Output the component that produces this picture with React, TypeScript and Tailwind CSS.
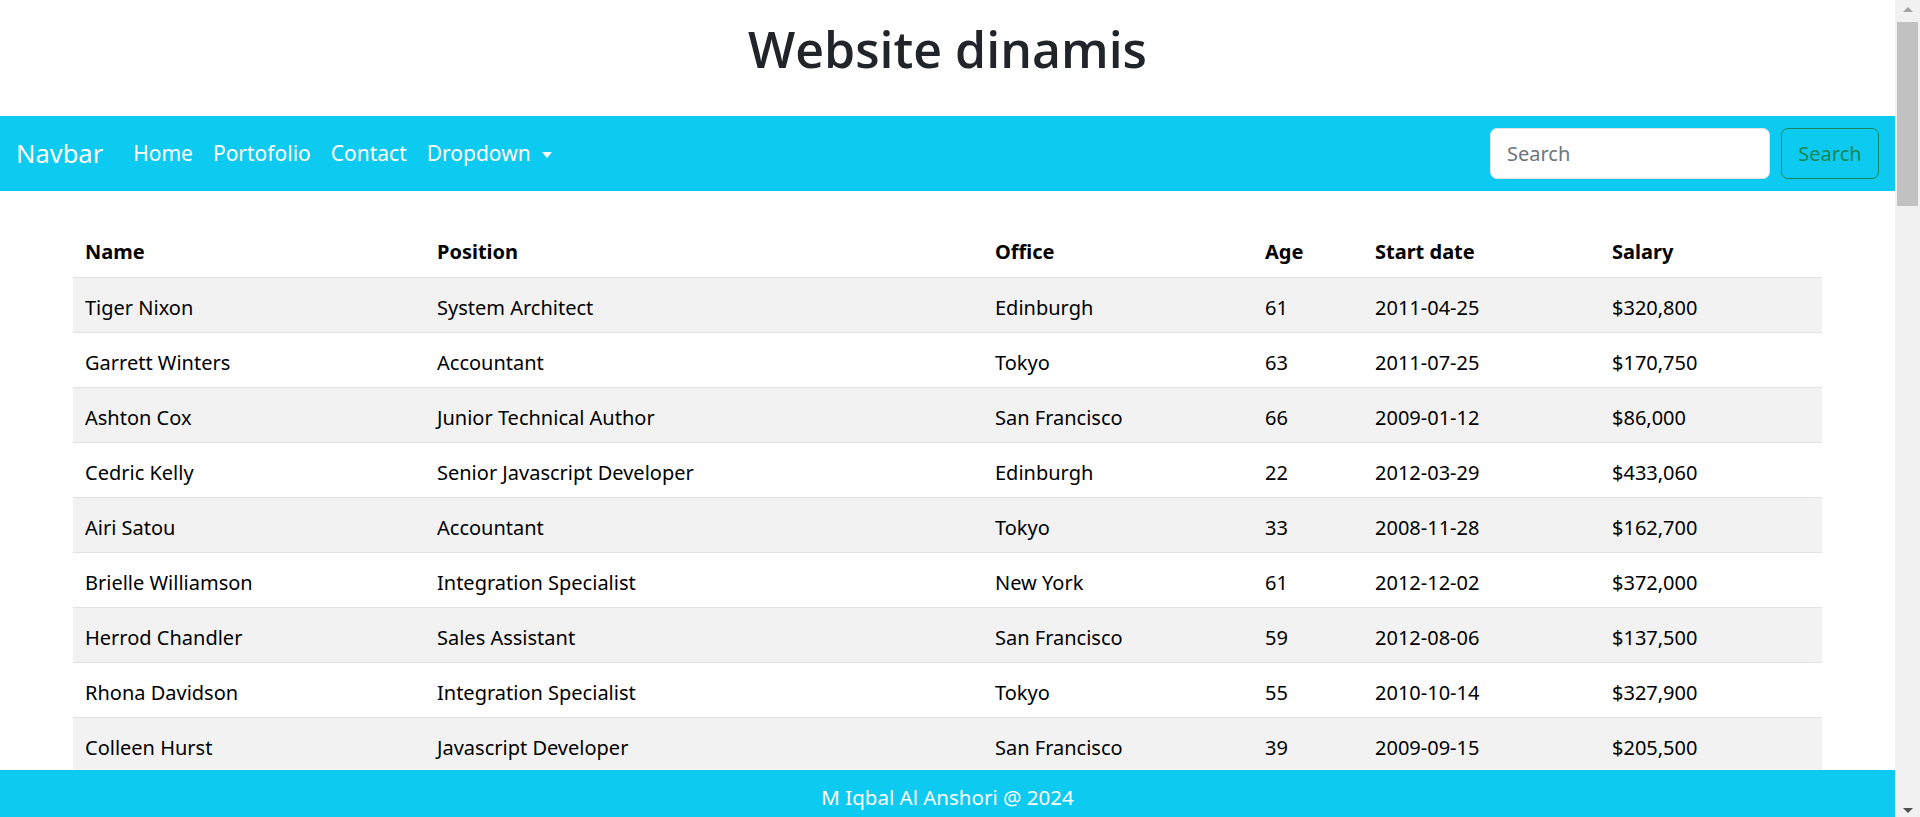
const rows = [
  ["Tiger Nixon", "System Architect", "Edinburgh", "61", "2011-04-25", "$320,800"],
  ["Garrett Winters", "Accountant", "Tokyo", "63", "2011-07-25", "$170,750"],
  ["Ashton Cox", "Junior Technical Author", "San Francisco", "66", "2009-01-12", "$86,000"],
  ["Cedric Kelly", "Senior Javascript Developer", "Edinburgh", "22", "2012-03-29", "$433,060"],
  ["Airi Satou", "Accountant", "Tokyo", "33", "2008-11-28", "$162,700"],
  ["Brielle Williamson", "Integration Specialist", "New York", "61", "2012-12-02", "$372,000"],
  ["Herrod Chandler", "Sales Assistant", "San Francisco", "59", "2012-08-06", "$137,500"],
  ["Rhona Davidson", "Integration Specialist", "Tokyo", "55", "2010-10-14", "$327,900"],
  ["Colleen Hurst", "Javascript Developer", "San Francisco", "39", "2009-09-15", "$205,500"],
];

const headers = ["Name", "Position", "Office", "Age", "Start date", "Salary"];

const grid = "grid grid-cols-[352px_558px_270px_110px_237px_222px]";

export default function App() {
  return (
    <div className="flex h-[817px] w-full overflow-hidden bg-white font-['Noto_Sans',sans-serif]">
      <div className="flex min-w-0 flex-1 flex-col">
        {/* page */}
        <div className="min-h-0 flex-1 overflow-hidden">
          <header className="h-[116px] pt-[19px] text-center">
            <h1 className="font-['Open_Sans','Noto_Sans',sans-serif] text-[50px] font-semibold leading-[1.2] text-[#212529]">Website dinamis</h1>
          </header>

          {/* Navbar */}
          <nav className="flex h-[75px] items-center bg-[#0dcaf0] pl-[16px] pr-[16px] text-white">
            <a href="#" className="mr-[20px] text-[25.5px] leading-[1.5]">Navbar</a>
            <ul className="flex items-center text-[21px] leading-[1.5]">
              <li><a href="#" className="block px-[10px]">Home</a></li>
              <li><a href="#" className="block px-[10px]">Portofolio</a></li>
              <li><a href="#" className="block px-[10px]">Contact</a></li>
              <li>
                <a href="#" className="flex items-center px-[10px]">
                  Dropdown
                  <span className="ml-[11px] mt-[2px] h-0 w-0 border-x-[5px] border-t-[6px] border-x-transparent border-t-white" />
                </a>
              </li>
            </ul>
            <form className="ml-auto flex items-center gap-[11px]">
              <input
                type="search"
                placeholder="Search"
                className="h-[51px] w-[280px] rounded-[7px] border border-[#dee2e6] bg-white px-[16px] text-[20px] text-[#212529] outline-none placeholder:text-[#6c757d]"
              />
              <button
                type="button"
                className="h-[51px] w-[98px] rounded-[7px] border border-[#198754] text-[20px] text-[#198754]"
              >
                Search
              </button>
            </form>
          </nav>

          {/* Table */}
          <div className="mx-[73px] mt-[32px] text-[20px] leading-[1.5] text-black">
            <div className={`${grid} h-[55px] border-b border-[#dee2e6] pt-[14px] font-bold`}>
              {headers.map((h) => (
                <div key={h} className="px-[12px]">{h}</div>
              ))}
            </div>
            {rows.map((r, i) => (
              <div
                key={r[0]}
                className={`${grid} h-[55px] border-b border-[#dee2e6] pt-[15px] ${i % 2 === 0 ? "bg-[#f2f2f2]" : "bg-white"}`}
              >
                {r.map((c, j) => (
                  <div key={j} className="px-[12px]">{c}</div>
                ))}
              </div>
            ))}
          </div>
        </div>

        {/* Footer */}
        <footer className="h-[47px] shrink-0 bg-[#0dcaf0] pt-[12px] text-center text-[20.5px] leading-[1.5] text-white">
          M Iqbal Al Anshori @ 2024
        </footer>
      </div>

      {/* scrollbar */}
      <div className="flex w-[25px] shrink-0 flex-col items-center bg-[#f1f1f1]">
        <span className="mt-[7px] h-0 w-0 border-x-[5px] border-b-[5px] border-x-transparent border-b-[#a3a3a3]" />
        <div className="mt-[10px] h-[184px] w-[21px] bg-[#c1c1c1]" />
        <span className="mb-[4px] mt-auto h-0 w-0 border-x-[5px] border-t-[5px] border-x-transparent border-t-[#505050]" />
      </div>
    </div>
  );
}
